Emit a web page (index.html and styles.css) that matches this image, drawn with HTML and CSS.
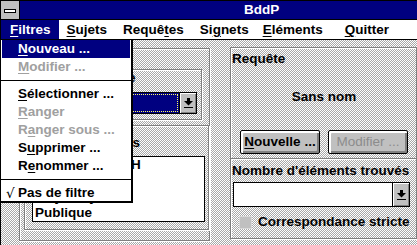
FILE: index.html
```html
<!DOCTYPE html>
<html lang="fr">
<head>
  <meta charset="UTF-8">
  <title>BddP</title>
  <link rel="stylesheet" href="styles.css">
</head>
<body>
  <div class="window">
    <div class="titlebar">
      <div class="sysmenu"><span class="sysdash"></span></div>
      <div class="title">BddP</div>
    </div>

    <div class="menubar">
      <span class="menu-item open"><u>F</u>iltres</span>
      <span class="menu-item"><u>S</u>ujets</span>
      <span class="menu-item">Requê<u>t</u>es</span>
      <span class="menu-item">Si<u>g</u>nets</span>
      <span class="menu-item elements"><u>E</u>léments</span>
      <span class="menu-item quit"><u>Q</u>uitter</span>
    </div>

    <div class="client">
      <div class="group outer">
        <div class="group search">
          <div class="label">Type de requête</div>
          <div class="combo dark">
            <div class="combo-field"><span class="focus"></span></div>
            <div class="combo-btn">
              <svg width="9" height="10" viewBox="0 0 9 10"><rect x="3" y="0" width="3" height="3" fill="#000"/><polygon points="0,3 9,3 4.5,7.5" fill="#000"/><rect x="0" y="9" width="9" height="1" fill="#000"/></svg>
            </div>
          </div>
        </div>
        <div class="group classes">
          <div class="label">Liste des classes</div>
          <div class="listbox">
            <div class="row">Enseignement H</div>
            <div class="row">Lycée général</div>
            <div class="row">Moyen Lycées</div>
            <div class="row">Publique</div>
          </div>
        </div>
      </div>

      <div class="right">
        <div class="group query">
          <div class="label">Requête</div>
          <div class="query-name">Sans nom</div>
          <div class="buttons">
            <div class="button"><u>N</u>ouvelle ...</div>
            <div class="button disabled">Modifier ...</div>
          </div>
        </div>
        <div class="group count">
          <div class="label">Nombre d'éléments trouvés</div>
          <div class="combo light">
            <div class="combo-field"></div>
            <div class="combo-btn">
              <svg width="9" height="10" viewBox="0 0 9 10"><rect x="3" y="0" width="3" height="3" fill="#000"/><polygon points="0,3 9,3 4.5,7.5" fill="#000"/><rect x="0" y="9" width="9" height="1" fill="#000"/></svg>
            </div>
          </div>
          <div class="check-row">
            <span class="checkbox"></span>
            <span>Correspondance stricte</span>
          </div>
        </div>
      </div>
    </div>

    <div class="dropdown">
      <div class="dd-item active"><u>N</u>ouveau ...</div>
      <div class="dd-item disabled"><u>M</u>odifier ...</div>
      <div class="dd-sep"></div>
      <div class="dd-item"><u>S</u>électionner ...</div>
      <div class="dd-item disabled"><u>R</u>anger</div>
      <div class="dd-item disabled">R<u>a</u>nger sous ...</div>
      <div class="dd-item">S<u>u</u>pprimer ...</div>
      <div class="dd-item">R<u>e</u>nommer ...</div>
      <div class="dd-sep"></div>
      <div class="dd-item last"><span class="check">√</span>Pas de filtre</div>
    </div>
  </div>
</body>
</html>
```

FILE: styles.css
```css
body {
  margin: 0;
  width: 417px;
  height: 245px;
  overflow: hidden;
  font-family: 'Liberation Sans', Arial, sans-serif;
  font-size: 13.5px;
  font-weight: bold;
  color: #000;
  background: #fff;
}

u {
  text-underline-offset: 2px;
}

.window {
  position: relative;
  height: 244px;
  border-left: 1px solid #000;
  border-top: 1px solid #000;
  background: repeating-conic-gradient(#a8a8a8 0 25%, #fff 0 50%) 0 0 / 2px 2px;
}

.titlebar {
  display: flex;
  height: 18px;
  background: #000080;
  border-bottom: 1px solid #000;
}

.sysmenu {
  width: 18px;
  background: #c0c0c0;
  border-right: 1px solid #000;
  position: relative;
}

.sysdash {
  position: absolute;
  left: 3px;
  top: 8px;
  width: 10px;
  height: 2px;
  background: #fff;
  border: 1px solid #000;
}

.title {
  color: #fff;
  line-height: 18px;
  padding-left: 224px;
}

.menubar {
  display: flex;
  height: 19px;
  line-height: 19px;
  background: #fff;
  border-bottom: 1px solid #000;
}

.menu-item {
  padding: 0 8px;
}

.menu-item:first-child {
  padding-left: 9px;
}

.menu-item.elements {
  padding-left: 6px;
}

.menu-item.quit {
  padding-left: 14px;
}

.menu-item.open {
  background: #000080;
  color: #fff;
}

.client {
  display: flex;
  align-items: flex-start;
  padding: 8px 0 0 18px;
}

.group {
  box-sizing: border-box;
  border: 1px solid #808080;
  box-shadow: inset 1px 1px 0 #fff, 1px 1px 0 #fff;
}

.label {
  line-height: 16px;
  white-space: nowrap;
}

.outer {
  width: 193px;
  height: 193px;
  padding: 20px 0 0 4px;
}

.search {
  width: 178px;
  height: 51px;
  padding: 0 0 0 8px;
}

.combo {
  display: flex;
  box-sizing: border-box;
  border: 1px solid #000;
}

.combo-field {
  flex: 1;
  position: relative;
}

.combo.dark {
  width: 167px;
  height: 22px;
  margin: 6px 0 0 -3px;
}

.combo.dark .combo-field {
  background: #000080;
}

.focus {
  position: absolute;
  left: 1px;
  top: 1px;
  right: 1px;
  bottom: 1px;
  border: 1px dotted #ffff60;
}

.combo.light .combo-field {
  background: #fff;
}

.combo-btn {
  width: 16px;
  display: flex;
  align-items: center;
  justify-content: center;
  background: #c0c0c0;
  border-left: 1px solid #000;
  box-shadow: inset 1px 1px 0 #fff, inset -1px -1px 0 #808080;
}

.classes {
  width: 185px;
  height: 105px;
  margin-top: 5px;
  padding: 9px 0 0 4px;
}

.listbox {
  width: 173px;
  height: 66px;
  box-sizing: border-box;
  margin: 5px 0 0 3px;
  border: 1px solid #000;
  background: #fff;
  overflow: hidden;
}

.row {
  line-height: 16px;
  padding-left: 2px;
  white-space: nowrap;
}

.right {
  margin: -1px 0 0 20px;
  width: 187px;
  flex: none;
}

.query {
  height: 112px;
  padding: 3px 0 0 1px;
}

.query-name {
  margin-top: 22px;
  line-height: 16px;
  text-align: center;
}

.buttons {
  display: flex;
  justify-content: center;
  gap: 8px;
  margin-top: 25px;
}

.button {
  width: 80px;
  height: 24px;
  box-sizing: border-box;
  border: 1px solid #000;
  border-radius: 2px;
  background: #c0c0c0;
  box-shadow: inset 1px 1px 0 #fff, inset 2px 2px 0 #fff, inset -1px -1px 0 #808080, inset -2px -2px 0 #808080;
  line-height: 22px;
  text-align: center;
  white-space: nowrap;
}

.button.disabled {
  color: #8c8c8c;
  font-weight: normal;
}

.count {
  height: 80px;
  border-top: none;
  padding: 4px 0 0 1px;
}

.combo.light {
  width: 177px;
  height: 25px;
  margin: 3px 0 0 1px;
}

.check-row {
  display: flex;
  align-items: center;
  height: 16px;
  margin-top: 7px;
  line-height: 16px;
}

.checkbox {
  width: 13px;
  height: 13px;
  box-sizing: border-box;
  margin: 0 6px 0 7px;
  background: #c0c0c0;
  border: 1px solid #d8d8d8;
}

.dropdown {
  position: absolute;
  left: -1px;
  top: 39px;
  width: 133px;
  box-sizing: border-box;
  background: #fff;
  border: 1px solid #000;
  border-right-width: 2px;
  border-bottom-width: 2px;
  border-top: none;
}

.dd-item {
  position: relative;
  height: 18px;
  line-height: 18px;
  margin: 0 1px;
  padding-left: 16px;
  white-space: nowrap;
}

.dd-item.active {
  background: #000080;
  color: #fff;
}

.dd-item.disabled {
  color: #a0a0a0;
}

.dd-item.last {
  height: 17px;
}

.dd-sep {
  height: 9px;
  position: relative;
}

.dd-sep::after {
  content: "";
  position: absolute;
  left: 0;
  right: 0;
  top: 4px;
  border-top: 1px solid #000;
}

.check {
  position: absolute;
  left: 4px;
  font-family: 'DejaVu Sans', sans-serif;
  font-weight: normal;
}
```
